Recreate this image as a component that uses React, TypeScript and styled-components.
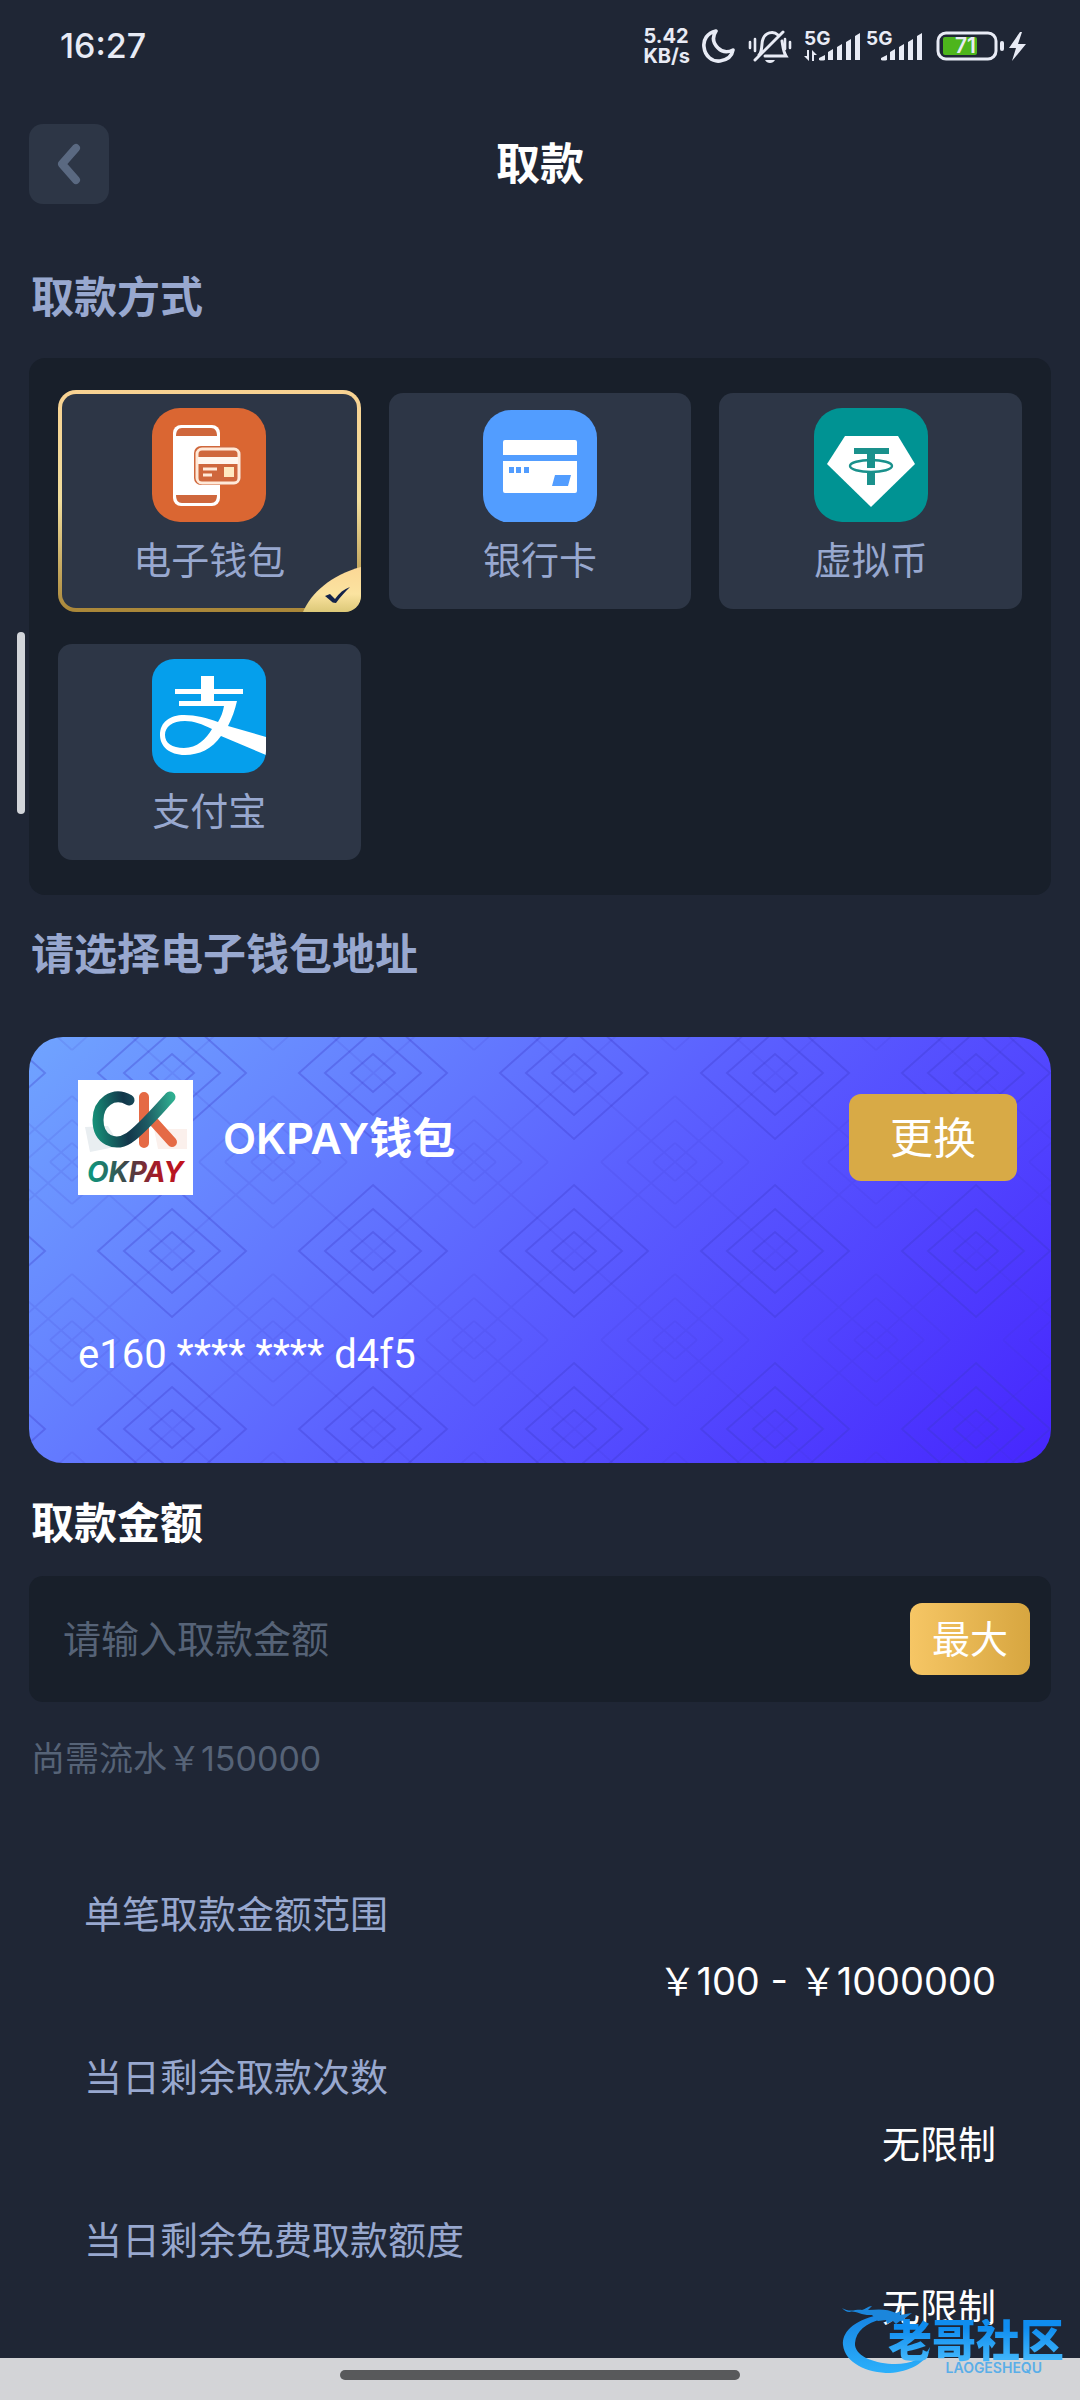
import React, { useState } from "react";
import styled, { createGlobalStyle, css } from "styled-components";

const color = {
  page: "#1f2635",
  panel: "#181f2a",
  tile: "#2d3646",
  muted: "#98a8cf",
  faint: "#566377",
  status: "#e8ebf5",
  gold: "#d8aa46",
};

const GlobalStyle = createGlobalStyle`
  *, *::before, *::after { box-sizing: border-box; }
  body {
    margin: 0;
    background: ${color.page};
    color: #fff;
    font-family: Inter, "Noto Sans CJK SC", sans-serif;
    font-size: 38px;
    line-height: 48px;
  }
  button, input { font: inherit; color: inherit; }
`;

const Page = styled.div`
  position: relative;
  display: flex;
  flex-direction: column;
  min-height: 100vh;
`;

const StatusBar = styled.div`
  display: flex;
  align-items: center;
  justify-content: space-between;
  height: 92px;
  padding: 0 52px 0 60px;
  color: ${color.status};
`;

const Clock = styled.time`
  font-size: 34px;
  font-weight: 500;
`;

const StatusIcons = styled.div`
  display: flex;
  align-items: center;
  gap: 12px;
`;

const SignalGroup = styled.div`
  display: flex;
  gap: 4px;
`;

const NetSpeed = styled.div`
  display: flex;
  flex-direction: column;
  font-size: 20px;
  font-weight: 700;
  line-height: 20px;
`;

const Header = styled.header`
  display: grid;
  grid-template-columns: 80px 1fr 80px;
  align-items: center;
  height: 144px;
  padding: 0 29px;
`;

const BackButton = styled.button`
  display: grid;
  place-items: center;
  height: 80px;
  padding: 0;
  border: 0;
  border-radius: 14px;
  background: ${color.tile};
`;

const Title = styled.h1`
  margin: 0;
  font-size: 44px;
  font-weight: 600;
  line-height: 60px;
  text-align: center;
`;

const Main = styled.main`
  display: flex;
  flex-direction: column;
  padding: 31px 29px 24px;
`;

const headingText = css`
  margin: 0;
  padding-left: 2px;
  font-size: 43px;
  font-weight: 700;
  line-height: 60px;
`;

const SectionTitle = styled.h2`
  ${headingText}
  color: ${color.muted};
`;

const AmountLabel = styled.label`
  ${headingText}
  display: block;
  margin-top: 30px;
`;

const MethodPanel = styled.div`
  display: grid;
  grid-template-columns: repeat(3, 1fr);
  gap: 35px 28px;
  margin: 31px 0 29px;
  padding: 35px 29px;
  border-radius: 16px;
  background: ${color.panel};
`;

const MethodTile = styled.label<{ $active: boolean }>`
  position: relative;
  display: flex;
  flex-direction: column;
  align-items: center;
  gap: 16px;
  height: 216px;
  padding-top: 15px;
  border-radius: 14px;
  background: ${color.tile};
  color: ${color.muted};
  line-height: 44px;
  cursor: pointer;
  ${(p) =>
    p.$active &&
    css`
      height: 222px;
      margin: -3px 0;
      padding-top: 14px;
      border: 4px solid transparent;
      border-radius: 18px;
      background:
        linear-gradient(${color.tile}, ${color.tile}) padding-box,
        linear-gradient(#f8d292, #f0dd9c 50%, #a98638) border-box;
    `}
`;

const HiddenRadio = styled.input`
  position: absolute;
  opacity: 0;
  pointer-events: none;
`;

const CornerMark = styled.svg`
  position: absolute;
  right: -4px;
  bottom: -4px;
`;

const WalletCard = styled.section`
  position: relative;
  display: flex;
  flex-direction: column;
  justify-content: space-between;
  height: 426px;
  margin-top: 53px;
  padding: 43px 34px 84px 49px;
  border-radius: 34px;
  overflow: hidden;
  background: linear-gradient(135deg, #70a4ff, #5b60ff 50%, #4626fe);
`;

const CardPattern = styled.svg`
  position: absolute;
  inset: 0;
  width: 100%;
  height: 100%;
`;

const WalletRow = styled.div`
  position: relative;
  display: flex;
  align-items: center;
  gap: 30px;
`;

const WalletName = styled.div`
  flex: 1;
  font-size: 43px;
  font-weight: 600;
  line-height: 60px;
`;

const ChangeButton = styled.button`
  width: 168px;
  height: 87px;
  padding: 0;
  border: 0;
  border-radius: 12px;
  background: ${color.gold};
  font-size: 43px;
`;

const WalletNumber = styled.div`
  position: relative;
  font-family: Roboto, "Noto Sans CJK SC", sans-serif;
  font-size: 40px;
`;

const AmountBox = styled.div`
  display: flex;
  align-items: center;
  height: 126px;
  margin-top: 23px;
  padding: 0 21px 0 34px;
  border-radius: 14px;
  background: ${color.panel};
`;

const AmountInput = styled.input`
  flex: 1;
  min-width: 0;
  padding: 0;
  border: 0;
  outline: 0;
  background: transparent;
  &::placeholder { color: ${color.faint}; opacity: 1; }
`;

const MaxButton = styled.button`
  width: 120px;
  height: 72px;
  padding: 0;
  border: 0;
  border-radius: 12px;
  background: linear-gradient(90deg, #f6c665, #d7a640);
`;

const Note = styled.p`
  margin: 33px 0 0;
  padding-left: 2px;
  color: ${color.faint};
  font-size: 34px;
`;

const LimitList = styled.dl`
  display: flex;
  flex-direction: column;
  gap: 48px;
  margin: 107px 0 0;
  padding: 0 55px;
`;

const LimitRow = styled.div`
  display: flex;
  flex-direction: column;
  gap: 19px;
`;

const LimitName = styled.dt`
  color: ${color.muted};
`;

const LimitValue = styled.dd`
  margin: 0;
  text-align: right;
`;

const ScrollThumb = styled.div`
  position: absolute;
  top: 632px;
  left: 17px;
  width: 8px;
  height: 182px;
  border-radius: 4px;
  background: #d2d5da;
`;

const GestureBar = styled.footer`
  display: flex;
  justify-content: center;
  height: 42px;
  margin-top: auto;
  padding-top: 12px;
  background: #d3d4d7;
`;

const GestureHandle = styled.div`
  width: 37%;
  height: 10px;
  border-radius: 5px;
  background: #58595b;
`;

const Watermark = styled.div`
  position: absolute;
  right: 16px;
  bottom: 25px;
  width: 222px;
  height: 72px;
  pointer-events: none;
`;

const Dragon = styled.svg`
  position: absolute;
  inset: 0;
`;

const WatermarkText = styled.div`
  position: relative;
  display: flex;
  flex-direction: column;
  align-items: flex-end;
  padding-top: 16px;
  font-size: 44px;
  font-weight: 900;
  line-height: 44px;
  span {
    background: linear-gradient(#0f8df0 20%, #3fb4fa 90%);
    background-clip: text;
    -webkit-background-clip: text;
    color: transparent;
  }
  small {
    padding-right: 22px;
    color: #5aaee8;
    font-size: 14px;
    font-weight: 600;
    line-height: 10px;
  }
`;

const SignalBars = ({ active }: { active?: boolean }) => (
  <svg width="58" height="44" viewBox="0 -6 58 44" fill="currentColor" aria-hidden="true">
    <text x="0" y="15" fontSize="19" fontWeight="700" fontFamily="Inter, sans-serif">5G</text>
    {active && <path d="M3 20v6H0l5 5V20zM8 31V20l5 5h-3v6z" />}
    <path d="M15 30v-2l6-3v5q-3 1-6 0zM24 30v-8l5-3v11zM33 30V17l5-3v16zM42 30V12l5-3v21zM51 30V6l5-3v27z" />
  </svg>
);

const StatusGlyphs = () => (
  <>
    <svg width="34" height="36" viewBox="0 0 34 36" fill="none" stroke="currentColor" strokeWidth="3.6" strokeLinejoin="round" aria-hidden="true">
      <path d="M14 3C5 5 1 12 2 19c1 9 8 15 16 14 7-1 12-5 13-11-6 3-11 2-15-2-5-5-6-11-2-17z" />
    </svg>
    <svg width="44" height="36" viewBox="0 0 44 36" fill="none" stroke="currentColor" strokeWidth="3" strokeLinecap="round" aria-hidden="true">
      <path d="M11 27c4-4 2-12 4-16C17 5 25 2 30 7M34 13c1 5 1 10 4 15H17M7 32 35 4" />
      <path d="M2 14v6M7 11v12M37 11v10M42 14v6" strokeWidth="2.6" />
      <path d="M17 32h10c-2 4-8 4-10 0z" fill="currentColor" stroke="none" />
    </svg>
    <SignalGroup>
      <SignalBars active />
      <SignalBars />
    </SignalGroup>
    <svg width="92" height="32" viewBox="0 0 92 32" fill="none" aria-hidden="true">
      <rect x="2" y="3" width="58" height="26" rx="8" stroke="currentColor" strokeWidth="3" />
      <rect x="7" y="7" width="34" height="18" rx="2" fill="#4db51c" />
      <rect x="64" y="11" width="4" height="10" rx="2" fill="currentColor" />
      <path d="M84 2 73 18h7l-4 13 14-17h-8l4-12z" fill="currentColor" />
      <text x="19" y="23" fill="currentColor" fontSize="21" fontWeight="600" fontFamily="Inter, sans-serif">71</text>
    </svg>
  </>
);

const WalletIcon = () => (
  <svg width="114" height="114" viewBox="0 0 114 114" aria-hidden="true">
    <rect width="114" height="114" rx="28" fill="#da6632" />
    <rect x="21" y="17" width="47" height="81" rx="8" fill="#fff" />
    <path d="M24 28c0-5 2-8 6-8h29c4 0 6 3 6 8zM24 87h41c0 5-2 8-6 8H30c-4 0-6-3-6-8z" fill="#cf673c" />
    <rect x="42" y="38" width="47" height="39" rx="7" fill="#cf673c" />
    <rect x="45" y="41" width="42" height="34" rx="5" fill="none" stroke="#ffe9d8" strokeWidth="3" />
    <path d="M46 49h40v7H46z" fill="#fff6ee" />
    <path d="M51 61h14M51 67h9" stroke="#ffe9d8" strokeWidth="3" />
    <rect x="72" y="59" width="10" height="10" fill="#ffe9c0" />
  </svg>
);

const BankIcon = () => (
  <svg width="114" height="114" viewBox="0 0 114 114" aria-hidden="true">
    <rect y="2" width="114" height="113" rx="28" fill="#529dff" />
    <path d="M22 32h70a2 2 0 0 1 2 2v13H20V34a2 2 0 0 1 2-2zM20 53h74v30a2 2 0 0 1-2 2H22a2 2 0 0 1-2-2z" fill="#fff" />
    <path d="M26 59h5v6h-5zM33 59h5v6h-5zM41 59h5v6h-5zM72 67h16l-3 11H69z" fill="#529dff" />
  </svg>
);

const TetherIcon = () => (
  <svg width="114" height="114" viewBox="0 0 114 114" aria-hidden="true">
    <rect width="114" height="114" rx="28" fill="#009393" />
    <path d="M31 28h53l17 28-44 43-44-43z" fill="#fff" />
    <path d="M40 40h35v6H61v14h-8V46H40zM53 65h8v12h-8z" fill="#1a918c" />
    <ellipse cx="57" cy="58" rx="21" ry="6" fill="none" stroke="#1a918c" strokeWidth="2.4" />
  </svg>
);

const AlipayIcon = () => (
  <svg width="114" height="114" viewBox="0 0 114 114" aria-hidden="true">
    <clipPath id="alipay-shape"><rect width="114" height="114" rx="22" /></clipPath>
    <g clipPath="url(#alipay-shape)">
      <rect width="114" height="114" fill="#059fec" />
      <path d="M49 17h13v13h29v5H62v7h23c-2 9-5 17-9 25l38 11v18L69 77C60 90 47 96 33 96 17 96 8 87 8 76c0-13 10-20 24-20 12 0 23 3 34 7 3-5 5-10 6-16H27v-5h22v-7H23v-5h26zM60 70C50 65 42 62 33 62c-13 0-20 6-20 14s7 13 19 13c13 0 22-9 28-19z" fill="#fff" fillRule="evenodd" />
    </g>
  </svg>
);

const OkpayLogo = () => (
  <svg width="115" height="115" viewBox="0 0 115 115" fill="none" strokeLinecap="round" role="img" aria-label="OKPAY">
    <defs>
      <linearGradient id="ck-teal" x1="15" y1="40" x2="96" y2="30" gradientUnits="userSpaceOnUse">
        <stop offset="0" stopColor="#169078" />
        <stop offset=".4" stopColor="#12364a" />
        <stop offset=".65" stopColor="#1d5a63" />
        <stop offset="1" stopColor="#2fae90" />
      </linearGradient>
      <linearGradient id="ck-word" x1="10" y1="0" x2="108" y2="0" gradientUnits="userSpaceOnUse">
        <stop offset="0" stopColor="#0d9a80" />
        <stop offset=".4" stopColor="#3f4447" />
        <stop offset=".7" stopColor="#a61a28" />
        <stop offset="1" stopColor="#c5121c" />
      </linearGradient>
    </defs>
    <rect width="115" height="115" fill="#fff" />
    <path d="M7 47 30 46l12 20-30 6z" fill="#e9eef1" />
    <path d="M76 49h33v20H80z" fill="#fbf0ec" />
    <path d="M66 17v46M76 42l18 20" stroke="#e56a45" strokeWidth="10" />
    <path d="M51 20C35 11 20 23 20 40c0 20 17 27 31 18C64 49 80 30 92 17" stroke="url(#ck-teal)" strokeWidth="11" />
    <text x="9" y="102" fill="url(#ck-word)" fontFamily="Inter, sans-serif" fontSize="28" fontStyle="italic" fontWeight="700">OKPAY</text>
  </svg>
);

const DiamondPattern = () => (
  <CardPattern aria-hidden="true">
    <defs>
      <pattern id="diamonds" x="43" y="-53" width="201" height="178" patternUnits="userSpaceOnUse">
        <g fill="none" stroke="#3a35c8" strokeWidth="2">
          <path strokeOpacity=".3" d="M100 23 174 89 100 155 26 89zM100 47 148 89 100 131 52 89zM100 70 122 89 100 108 78 89z" />
          <path strokeOpacity=".12" d="M0 0 201 178M201 0 0 178M0 66 74 0M127 0 201 66M0 112 74 178M127 178 201 112M0 42 48 0M153 0 201 42M0 136 48 178M153 178 201 136M0 19 22 0M179 0 201 19M0 159 22 178M179 178 201 159" />
        </g>
      </pattern>
    </defs>
    <rect width="100%" height="100%" fill="url(#diamonds)" />
  </CardPattern>
);

const methods = [
  { id: "wallet", name: "电子钱包", Icon: WalletIcon },
  { id: "bank", name: "银行卡", Icon: BankIcon },
  { id: "crypto", name: "虚拟币", Icon: TetherIcon },
  { id: "alipay", name: "支付宝", Icon: AlipayIcon },
];

const limits = [
  { name: "单笔取款金额范围", value: "￥100 - ￥1000000" },
  { name: "当日剩余取款次数", value: "无限制" },
  { name: "当日剩余免费取款额度", value: "无限制" },
];

export default function App() {
  const [method, setMethod] = useState("wallet");
  const [amount, setAmount] = useState("");

  return (
    <Page>
      <GlobalStyle />
      <StatusBar>
        <Clock>16:27</Clock>
        <StatusIcons>
          <NetSpeed>
            <span>5.42</span>
            <span>KB/s</span>
          </NetSpeed>
          <StatusGlyphs />
        </StatusIcons>
      </StatusBar>

      <Header>
        <BackButton type="button" aria-label="返回">
          <svg width="24" height="42" viewBox="0 0 24 42" fill="none" stroke="#5a6981" strokeWidth="8" strokeLinecap="round" strokeLinejoin="round" aria-hidden="true">
            <path d="M19 5 5 21l14 16" />
          </svg>
        </BackButton>
        <Title>取款</Title>
      </Header>

      <Main>
        <SectionTitle id="method-title">取款方式</SectionTitle>
        <MethodPanel role="radiogroup" aria-labelledby="method-title">
          {methods.map(({ id, name, Icon }) => (
            <MethodTile key={id} $active={method === id}>
              <HiddenRadio type="radio" name="method" value={id} checked={method === id} onChange={() => setMethod(id)} />
              <Icon />
              {name}
              {method === id && (
                <CornerMark width="58" height="45" viewBox="0 0 58 45" aria-hidden="true">
                  <defs>
                    <linearGradient id="corner-gold" x1="0" y1="0" x2="0" y2="1">
                      <stop offset="0" stopColor="#fbd795" />
                      <stop offset=".6" stopColor="#fbe3a0" />
                      <stop offset="1" stopColor="#dcc878" />
                    </linearGradient>
                  </defs>
                  <path d="M0 45C8 26 28 8 58 0v29a16 16 0 0 1-16 16z" fill="url(#corner-gold)" />
                  <path d="m22 29 5-2 5 5c4-6 9-10 15-12-5 5-10 10-14 16-3 0-4-1-5-2z" fill="#14234a" />
                </CornerMark>
              )}
            </MethodTile>
          ))}
        </MethodPanel>

        <SectionTitle>请选择电子钱包地址</SectionTitle>
        <WalletCard>
          <DiamondPattern />
          <WalletRow>
            <OkpayLogo />
            <WalletName>OKPAY钱包</WalletName>
            <ChangeButton type="button">更换</ChangeButton>
          </WalletRow>
          <WalletNumber>e160 **** **** d4f5</WalletNumber>
        </WalletCard>

        <AmountLabel htmlFor="amount">取款金额</AmountLabel>
        <AmountBox>
          <AmountInput
            id="amount"
            inputMode="decimal"
            placeholder="请输入取款金额"
            value={amount}
            onChange={(e) => setAmount(e.target.value)}
          />
          <MaxButton type="button" onClick={() => setAmount("1000000")}>最大</MaxButton>
        </AmountBox>
        <Note>尚需流水￥150000</Note>

        <LimitList>
          {limits.map((limit) => (
            <LimitRow key={limit.name}>
              <LimitName>{limit.name}</LimitName>
              <LimitValue>{limit.value}</LimitValue>
            </LimitRow>
          ))}
        </LimitList>
      </Main>

      <GestureBar>
        <GestureHandle />
      </GestureBar>
      <ScrollThumb />
      <Watermark>
        <Dragon width="220" height="72" viewBox="0 0 220 72" aria-hidden="true">
          <defs>
            <linearGradient id="dragon-blue" x1="0" y1="0" x2="0" y2="1">
              <stop offset="0" stopColor="#1684e4" />
              <stop offset="1" stopColor="#2bb0fb" />
            </linearGradient>
          </defs>
          <path d="M36 12C10 18 0 30 1 42c2 18 24 28 47 28 18-1 38-10 40-26-6 12-22 18-38 17-20-1-38-9-37-21 1-12 11-20 27-24z" fill="url(#dragon-blue)" />
          <path d="M0 5c8 5 14 1 20 2 4-1 6-4 10-4l-4 4c12-1 20-1 28 3l5-2-1 4 12-2-8 6 6 1-10 1-4 3-3-3-6 3-1-4-8 1-6-6C20 13 12 7 8 9 4 9 2 7 0 5z" fill="#1b86dc" />
        </Dragon>
        <WatermarkText>
          <span>老哥社区</span>
          <small>LAOGESHEQU</small>
        </WatermarkText>
      </Watermark>
    </Page>
  );
}
